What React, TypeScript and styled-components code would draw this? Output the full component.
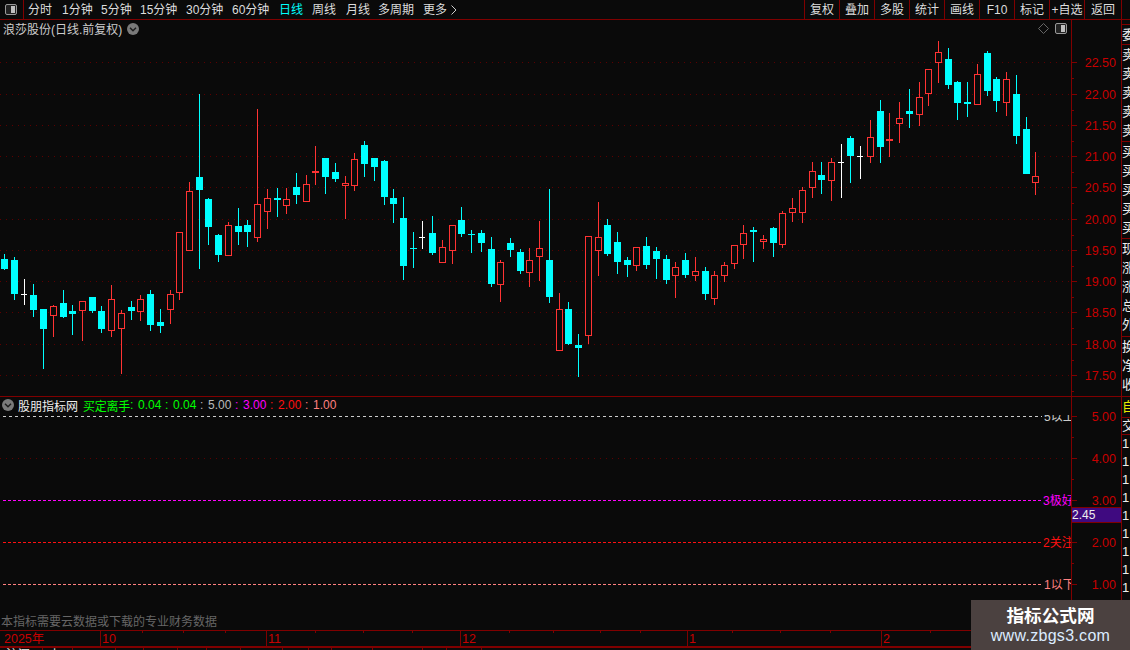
import React from "react";
import styled, { createGlobalStyle } from "styled-components";

const FONT = `"Liberation Sans", "Noto Sans CJK SC", sans-serif`;
const LINE = "#800000";
const AXIS = "#c80000";

const Global = createGlobalStyle`
  html, body { margin: 0; padding: 0; background: #0a0a0a; overflow: hidden; }
  #root { width: 1130px; height: 650px; }
`;

const Page = styled.div`
  position: relative; width: 1130px; height: 650px; background: #0a0a0a; overflow: hidden;
  display: flex; flex-direction: column; font-family: ${FONT}; font-size: 12px; color: #ddd;
`;
const TopBar = styled.div`
  flex: none; height: 20px; box-sizing: border-box; border-bottom: 1px solid ${LINE};
  display: flex; align-items: center;
`;
const IconCell = styled.div`
  width: 24px; height: 19px; box-sizing: border-box; padding-left: 5px; border-right: 1px solid ${LINE};
  flex: none; display: flex; align-items: center; margin-right: 4px;
`;
const Tab = styled.div<{ $w: number; $active?: boolean }>`
  width: ${(p) => p.$w}px; flex: none; white-space: nowrap; line-height: 20px; height: 19px;
  display: flex; align-items: center; gap: 4px;
  color: ${(p) => (p.$active ? "#00ffff" : "#ddd")};
`;
const Spacer = styled.div`flex: 1;`;
const ToolButton = styled.div<{ $w?: number }>`
  width: ${(p) => p.$w ?? 35}px; height: 19px; box-sizing: border-box; flex: none; border-left: 1px solid ${LINE};
  text-align: center; line-height: 20px; white-space: nowrap; overflow: hidden;
`;
const RightGap = styled.div`
  width: 9px; height: 19px; flex: none; box-sizing: border-box; border-left: 1px solid ${LINE};
`;
const MainRow = styled.div`flex: none; height: 376px; display: flex;`;
const PlotColumn = styled.div`width: 1071px; flex: none; display: flex; flex-direction: column;`;
const TitleRow = styled.div`
  flex: none; height: 18px; box-sizing: border-box; display: flex; align-items: center;
  padding: 0 3px 1px 3px; color: #ccc; gap: 5px;
`;
const TitleText = styled.span`white-space: nowrap;`;
const TitleTools = styled.div`margin-left: auto; display: flex; align-items: center; gap: 6px; padding-right: 1px;`;
const Chart = styled.svg`display: block; flex: none;`;
const SideColumn = styled.div`
  flex: 1; box-sizing: border-box; border-left: 1px solid ${LINE}; overflow: hidden; color: #eee;
  display: flex; flex-direction: column; font-size: 13px;
`;
const SideSection = styled.div<{ $h: number; $open?: boolean }>`
  flex: none; height: ${(p) => p.$h}px; box-sizing: border-box; overflow: hidden;
  border-bottom: ${(p) => (p.$open ? "none" : `1px solid ${LINE}`)};
  display: flex; flex-direction: column;
`;
const SideRow = styled.div<{ $h: number; $c?: string }>`
  flex: none; height: ${(p) => p.$h}px; line-height: ${(p) => p.$h}px; white-space: nowrap; width: 8px;
  color: ${(p) => p.$c ?? "#eee"}; overflow: hidden;
`;
const IndicatorRow = styled.div`
  flex: none; height: 234px; box-sizing: border-box; border-top: 1px solid ${LINE}; display: flex; position: relative;
`;
const IndicatorPlot = styled.div`width: 1071px; flex: none; display: flex; flex-direction: column;`;
const IndicatorHead = styled.div`
  flex: none; height: 18px; box-sizing: border-box; display: flex; align-items: center;
  padding: 0 0 2px 2px; white-space: nowrap;
`;
const IndicatorName = styled.span`color: #eee; margin-left: 4px; width: 65px; flex: none;`;
const SignalName = styled.span`color: #00ff00; width: 47px; flex: none; letter-spacing: -0.25px;`;
const Reading = styled.span<{ $c: string }>`
  color: ${(p) => p.$c}; width: 35px; flex: none; display: flex; box-sizing: border-box; gap: 5px;
  &::before { content: ":"; width: 3px; }
`;
const FootNote = styled.div`
  flex: none; height: 16px; line-height: 16px; padding-left: 1px; color: #666; white-space: nowrap;
`;
const PriceTag = styled.div`
  position: absolute; left: 1072px; top: 110px; width: 49px; height: 16px; box-sizing: border-box;
  background: #3f0a80; border-top: 1px solid ${LINE}; border-bottom: 1px solid ${LINE};
  color: #eee; line-height: 14px; padding-left: 0; font-size: 12px;
`;
const StatusRow = styled.div`flex: 1; display: flex; overflow: hidden; border-top: 1px solid ${LINE}; box-sizing: border-box;`;
const StatusCell = styled.div<{ $w: number }>`
  width: ${(p) => p.$w}px; flex: none; box-sizing: border-box; border-right: 1px solid ${LINE};
  color: #eee; line-height: 15px; padding-left: 6px; white-space: nowrap; overflow: hidden;
`;
const Watermark = styled.div`
  position: absolute; left: 971px; top: 600px; width: 159px; height: 50px; background: #4b4140;
  display: flex; flex-direction: column; align-items: center;
`;
const WatermarkTitle = styled.div`
  font-size: 17.6px; font-weight: 700; color: #fff; line-height: 24px; margin-top: 4px;
`;
const WatermarkUrl = styled.div`font-size: 16px; color: #dcecff; line-height: 18px; margin-top: -1px; letter-spacing: 0.3px;`;

const ChevronCircle = () => (
  <svg width="12" height="12" viewBox="0 0 12 12" style={{ flex: "none" }}>
    <circle cx="6" cy="6" r="6" fill="#7a7a7a" />
    <path d="M3 4.8 L6 7.8 L9 4.8" fill="none" stroke="#1c1c1c" strokeWidth="1.4" />
  </svg>
);
const ChevronRight = () => (
  <svg width="6" height="10" viewBox="0 0 6 10" style={{ flex: "none" }}>
    <path d="M0.5 0.5 L5 5 L0.5 9.5" fill="none" stroke="#ccc" strokeWidth="1" />
  </svg>
);
const PanelIcon = () => (
  <svg width="12" height="11" viewBox="0 0 12 11" style={{ flex: "none", display: "block" }}>
    <rect x="0.5" y="0.5" width="11" height="10" rx="1.5" fill="#222" stroke="#999" />
    <rect x="6" y="2" width="4" height="7" fill="#c0c0c0" />
  </svg>
);
const DiamondIcon = () => (
  <svg width="11" height="11" viewBox="0 0 11 11" style={{ flex: "none", display: "block" }}>
    <path d="M5.5 0.5 L10.5 5.5 L5.5 10.5 L0.5 5.5 Z" fill="none" stroke="#666" />
  </svg>
);

type C = [number, number, number, number, number, string];
const candles: C[] = [
  [4,259,269,254,270,"c"],[14,260,294,257,300,"c"],[24,294,294,279,305,"w"],[33,295,310,284,317,"c"],[43,309,329,309,369,"c"],
  [53,306,316,305,337,"r"],[63,303,317,290,318,"c"],[72,311,314,305,335,"c"],[82,301,311,301,341,"r"],[92,297,311,297,313,"c"],
  [101,311,329,306,333,"c"],[111,299,331,285,337,"r"],[121,313,329,310,374,"r"],[131,307,311,301,320,"c"],[140,299,312,295,321,"r"],
  [150,294,325,290,331,"c"],[160,322,326,309,333,"c"],[170,294,310,290,324,"r"],[179,232,293,232,300,"r"],[189,191,251,182,251,"r"],
  [199,177,190,94,269,"c"],[208,199,227,198,245,"c"],[218,235,255,234,262,"c"],[228,225,256,222,256,"r"],[238,226,232,208,245,"c"],
  [247,225,232,220,247,"c"],[257,204,238,109,242,"r"],[267,198,212,189,229,"r"],[277,198,200,188,217,"c"],[286,199,206,188,214,"r"],
  [296,187,195,173,204,"c"],[306,184,202,175,202,"r"],[315,171,173,146,185,"R"],[325,158,177,158,194,"c"],[335,172,179,163,182,"c"],
  [345,183,186,176,219,"r"],[354,159,186,153,191,"r"],[364,145,164,141,177,"c"],[374,158,167,158,181,"c"],[384,161,197,160,205,"c"],
  [393,198,204,189,223,"c"],[403,218,266,197,280,"c"],[413,248,249,232,268,"c"],[422,237,237,221,249,"w"],[432,233,253,216,255,"c"],
  [442,247,263,240,263,"r"],[452,225,251,225,264,"r"],[461,220,234,207,237,"c"],[471,234,235,230,253,"c"],[481,233,243,230,252,"c"],
  [491,249,284,237,287,"c"],[500,262,285,260,302,"r"],[510,243,250,238,257,"c"],[520,252,271,249,274,"c"],[529,260,273,248,287,"r"],
  [539,248,257,221,281,"r"],[549,260,297,189,303,"c"],[559,309,351,293,351,"r"],[568,309,344,302,345,"c"],[578,345,348,334,377,"c"],
  [588,236,336,236,344,"r"],[598,237,251,202,276,"r"],[607,225,254,219,256,"c"],[617,242,262,232,274,"c"],[627,260,265,257,277,"c"],
  [636,247,266,247,271,"r"],[646,246,265,237,269,"c"],[656,251,259,247,279,"c"],[666,259,280,255,284,"c"],[675,267,276,262,298,"r"],
  [685,260,275,253,278,"c"],[695,271,276,257,281,"r"],[705,271,294,267,300,"c"],[714,275,299,271,305,"r"],[724,265,276,262,282,"r"],
  [734,245,264,245,269,"r"],[743,233,245,225,259,"r"],[753,230,232,227,262,"c"],[763,239,242,235,249,"r"],[773,228,243,227,257,"c"],
  [782,213,245,211,248,"r"],[792,208,213,198,222,"r"],[802,190,213,187,223,"r"],[812,171,188,162,198,"r"],[821,175,180,162,194,"c"],
  [831,162,181,158,201,"r"],[841,162,162,144,198,"w"],[850,138,156,136,183,"c"],[860,156,156,146,179,"w"],[870,137,157,120,163,"r"],
  [880,111,147,100,163,"c"],[889,139,141,113,157,"R"],[899,118,124,102,143,"r"],[909,111,114,89,128,"c"],[919,97,115,82,126,"r"],
  [928,69,94,69,106,"r"],[938,52,63,41,83,"r"],[948,59,85,48,89,"c"],[957,82,103,81,120,"c"],[967,102,104,82,117,"c"],
  [977,74,105,64,105,"r"],[987,53,91,51,96,"c"],[996,79,101,77,112,"c"],[1006,79,103,72,116,"r"],[1016,94,136,75,144,"c"],
  [1026,129,174,117,174,"c"],[1035,176,183,152,195,"r"],
];
const RED = "#ff3333";
const CYAN = "#00ffff";

const Candle = ({ d }: { d: C }) => {
  const [x, top, bot, hi, lo, k] = d;
  if (k === "w") {
    return (
      <g fill="#ffffff">
        <rect x={x} y={hi} width={1} height={lo - hi} />
        <rect x={x - 3} y={top} width={6} height={1} />
      </g>
    );
  }
  if (k === "c") {
    return (
      <g fill={CYAN}>
        <rect x={x} y={hi} width={1} height={lo - hi} />
        <rect x={x - 3} y={top} width={7} height={Math.max(bot - top, 1)} />
      </g>
    );
  }
  if (k === "R") {
    return (
      <g fill={RED}>
        <rect x={x} y={hi} width={1} height={lo - hi} />
        <rect x={x - 3} y={top} width={7} height={bot - top} />
      </g>
    );
  }
  return (
    <g>
      <rect x={x} y={hi} width={1} height={top - hi} fill={RED} />
      <rect x={x} y={bot} width={1} height={Math.max(lo - bot, 0)} fill={RED} />
      <rect x={x - 2.5} y={top + 0.5} width={6} height={bot - top - 1} fill="#0a0a0a" stroke={RED} />
    </g>
  );
};

const gridY = [62, 94, 125, 156, 187, 219, 250, 281, 312, 344, 375];
const priceLabels = ["22.50","22.00","21.50","21.00","20.50","20.00","19.50","19.00","18.50","18.00","17.50"];

const PriceChart = () => (
  <Chart width={1071} height={358} viewBox="0 38 1071 358" shapeRendering="crispEdges">
    {gridY.map((y) => (
      <line key={y} x1={0} x2={1071} y1={y + 0.5} y2={y + 0.5} stroke="#5c0000" strokeDasharray="1 5" />
    ))}
    {candles.map((d) => <Candle key={d[0]} d={d} />)}
  </Chart>
);

const axisText = { fontFamily: FONT, fontSize: 12.5, fill: AXIS, textAnchor: "end" as const };

const PriceAxis = () => (
  <Chart width={50} height={376} viewBox="1071 20 50 376" shapeRendering="crispEdges">
    <rect x={1071} y={20} width={1} height={376} fill={LINE} />
    {gridY.map((y, i) => (
      <g key={y}>
        <rect x={1071} y={y} width={6} height={1} fill={LINE} />
        <rect x={1071} y={y + 16} width={3} height={1} fill={LINE} />
        <text x={1116} y={y + 5} {...axisText} shapeRendering="auto">{priceLabels[i]}</text>
      </g>
    ))}
  </Chart>
);

const levels = [
  { y: 416, c: "#cccccc", dash: "3 3", label: "5以上", tx: 1044, ty: 421 },
  { y: 500, c: "#ff00ff", dash: "3 2", label: "3极好", tx: 1043, ty: 505 },
  { y: 542, c: "#ff1010", dash: "3 2", label: "2关注", tx: 1043, ty: 547 },
  { y: 584, c: "#ff8080", dash: "3 2", label: "1以下", tx: 1044, ty: 589 },
];

const IndicatorChart = () => (
  <Chart width={1071} height={199} viewBox="0 415 1071 199" shapeRendering="crispEdges">
    <line x1={0} x2={1068} y1={458.5} y2={458.5} stroke="#5c0000" strokeDasharray="1 5" />
    {levels.map((l) => (
      <g key={l.y}>
        <line x1={3} x2={1042} y1={l.y + 0.5} y2={l.y + 0.5} stroke={l.c} strokeDasharray={l.dash} />
        <text x={l.tx} y={l.ty} fontFamily={FONT} fontSize={12} fill={l.c} shapeRendering="auto">{l.label}</text>
      </g>
    ))}
  </Chart>
);

const IndicatorAxis = () => (
  <Chart width={50} height={233} viewBox="1071 397 50 233" shapeRendering="crispEdges">
    <rect x={1071} y={397} width={1} height={233} fill={LINE} />
    {[416, 458, 500, 542, 584].map((y, i) => (
      <g key={y}>
        <rect x={1071} y={y} width={6} height={1} fill={LINE} />
        <rect x={1071} y={y + 21} width={3} height={1} fill={LINE} />
        <text x={1116} y={y + 5} {...axisText} shapeRendering="auto">{`${5 - i}.00`}</text>
      </g>
    ))}
  </Chart>
);

const majors = [[100, "10"], [266, "11"], [460, "12"], [687, "1"], [881, "2"]] as const;
const minors = [142, 183, 225, 315, 363, 412, 509, 553, 600, 640, 732, 780, 830, 930];

const TimeAxis = () => (
  <Chart width={1130} height={17} viewBox="0 630 1130 17" shapeRendering="crispEdges" style={{ flex: "none" }}>
    <rect x={0} y={630} width={1130} height={1} fill={LINE} />
    <rect x={0} y={646} width={1130} height={1} fill={LINE} />
    {minors.map((x) => <rect key={x} x={x} y={631} width={1} height={2} fill={LINE} />)}
    {majors.map(([x, t]) => (
      <g key={x}>
        <rect x={x} y={631} width={1} height={15} fill={LINE} />
        <text x={x + 2} y={643} fontFamily={FONT} fontSize={12.5} fill={AXIS} shapeRendering="auto">{t}</text>
      </g>
    ))}
    <text x={4} y={643} fontFamily={FONT} fontSize={12.5} fill={AXIS} shapeRendering="auto">2025年</text>
  </Chart>
);

const tabs: [string, number, boolean?][] = [
  ["分时", 34], ["1分钟", 39], ["5分钟", 39], ["15分钟", 46], ["30分钟", 46], ["60分钟", 47],
  ["日线", 33, true], ["周线", 34], ["月线", 32], ["多周期", 45],
];
const tools = ["复权", "叠加", "多股", "统计", "画线", "F10", "标记", "+自选"];
const readings: [string, string][] = [
  ["0.04", "#00ff00"], ["0.04", "#00ff00"], ["5.00", "#bbbbbb"], ["3.00", "#ff00ff"], ["2.00", "#ff1010"], ["1.00", "#ff8080"],
];
const statusWidths = [43, 30, 43, 28, 34, 29, 34, 42, 26, 23, 41, 50, 24, 35];

export default function App() {
  return (
    <Page>
      <Global />
      <TopBar>
        <IconCell><PanelIcon /></IconCell>
        {tabs.map(([t, w, a]) => <Tab key={t} $w={w} $active={a}>{t}</Tab>)}
        <Tab $w={40}>更多<ChevronRight /></Tab>
        <Spacer />
        {tools.map((t) => <ToolButton key={t}>{t}</ToolButton>)}
        <ToolButton $w={37}>返回</ToolButton>
        <RightGap />
      </TopBar>
      <MainRow>
        <PlotColumn>
          <TitleRow>
            <TitleText>浪莎股份(日线.前复权)</TitleText>
            <ChevronCircle />
            <TitleTools><DiamondIcon /><PanelIcon /></TitleTools>
          </TitleRow>
          <PriceChart />
        </PlotColumn>
        <PriceAxis />
        <SideColumn>
          <SideSection $h={5} />
          <SideSection $h={20}><SideRow $h={19}>委</SideRow></SideSection>
          <SideSection $h={97}>{["卖","卖","卖","卖","卖"].map((t, i) => <SideRow key={i} $h={19}>{t}</SideRow>)}</SideSection>
          <SideSection $h={97}>{["买","买","买","买","买"].map((t, i) => <SideRow key={i} $h={19}>{t}</SideRow>)}</SideSection>
          <SideSection $h={98}>{["现","涨","涨","总","外"].map((t, i) => <SideRow key={i} $h={19}>{t}</SideRow>)}</SideSection>
          <SideSection $h={59} $open>{["换","净","收"].map((t, i) => <SideRow key={i} $h={19}>{t}</SideRow>)}</SideSection>
        </SideColumn>
      </MainRow>
      <IndicatorRow>
        <IndicatorPlot>
          <IndicatorHead>
            <ChevronCircle />
            <IndicatorName>股朋指标网</IndicatorName>
            <SignalName>买定离手</SignalName>
            {readings.map(([v, c], i) => <Reading key={i} $c={c}>{v}</Reading>)}
          </IndicatorHead>
          <IndicatorChart />
          <FootNote>本指标需要云数据或下载的专业财务数据</FootNote>
        </IndicatorPlot>
        <IndicatorAxis />
        <SideColumn>
          <SideSection $h={21}><SideRow $h={20} $c="#e8e800">自</SideRow></SideSection>
          <SideSection $h={17}><SideRow $h={16}>交</SideRow></SideSection>
          <SideSection $h={195} $open>
            {[0,1,2,3,4,5,6,7,8,9].map((i) => <SideRow key={i} $h={18}>1</SideRow>)}
          </SideSection>
        </SideColumn>
        <PriceTag>2.45</PriceTag>
      </IndicatorRow>
      <TimeAxis />
      <StatusRow>
        {statusWidths.map((w, i) => <StatusCell key={i} $w={w}>{i === 0 ? "沪深" : i === 1 ? "上" : ""}</StatusCell>)}
      </StatusRow>
      <Watermark>
        <WatermarkTitle>指标公式网</WatermarkTitle>
        <WatermarkUrl>www.zbgs3.com</WatermarkUrl>
      </Watermark>
    </Page>
  );
}
